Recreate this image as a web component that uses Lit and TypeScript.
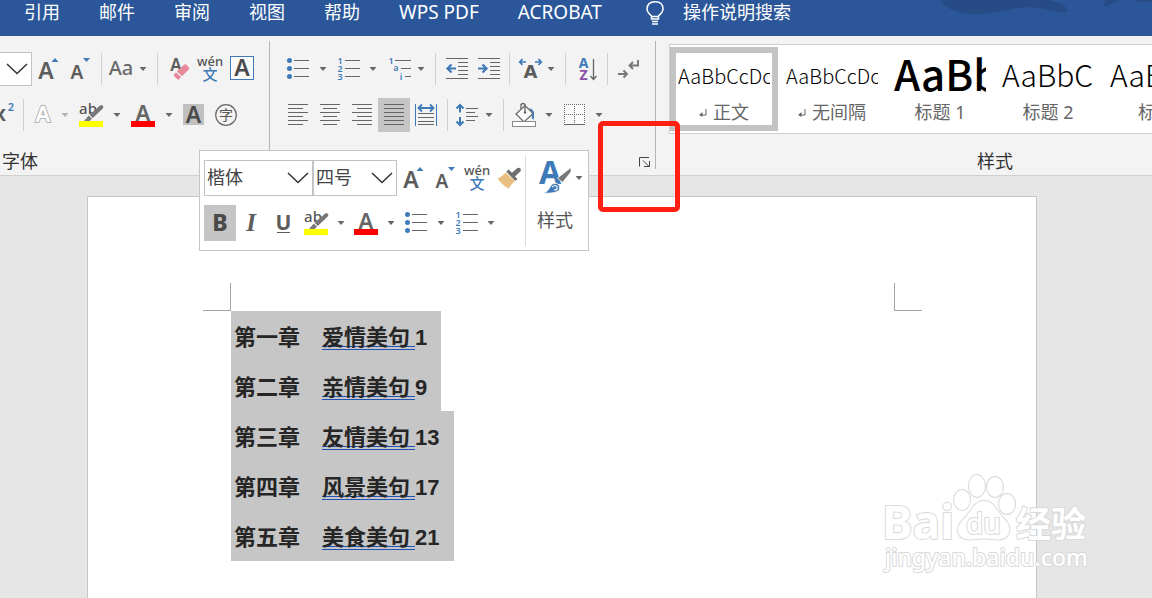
import { LitElement, html, svg, css, TemplateResult } from "lit";
import { customElement, property } from "lit/decorators.js";
import { classMap } from "lit/directives/class-map.js";

const GREY = "#666666";
const BLUE = "#3f7ab8";

const hline = (y: number, x1: number, x2: number) =>
  svg`<path d="M${x1} ${y + 0.5}H${x2}" stroke=${GREY} stroke-width="1"/>`;

const lines = (rows: Array<[number, number]>) => rows.map(([a, b], i) => hline(5 + i * 4, a, b));

const letter = (t: string, x: number, y: number, size: number, fill = "#5c5c5c", weight = 600, anchor = "middle") =>
  svg`<text x=${x} y=${y} font-size=${size} font-weight=${weight} fill=${fill} text-anchor=${anchor}>${t}</text>`;

const icons: Record<string, unknown> = {
  grow: svg`${letter("A", 14, 26, 23)}<path d="M19.500 9h7l-3.500-4z" fill=${BLUE}/>`,
  shrink: svg`${letter("A", 13, 26, 19)}<path d="M19 5h7l-3.500 4z" fill=${BLUE}/>`,
  aa: svg`${letter("Aa", 17, 22, 20, "#6a6a6a", 500)}`,
  clear: svg`${letter("A", 14, 18, 17)}
    <path d="M12 21.300 22.300 11.600Q23.500 10.800 24.500 11.800L27 14.500Q27.800 15.600 26.800 16.600L17 26.300Q16 27 15 26L12.300 23.300Q11.300 22.300 12 21.300Z" fill="#e88a9b"/>
    <path d="m14 18.500 6 5.500" stroke="#f3f3f3" stroke-width="1.200"/>`,
  pinyin: svg`${letter("wén", 16, 13, 13, "#555", 500)}${letter("文", 16, 27, 15, BLUE, 500)}`,
  charBorder: svg`<rect x="4.500" y="3.500" width="23" height="23" fill="#fafafa" stroke=${BLUE}/>${letter("A", 16, 23, 23, "#4a4a4a")}`,
  superscript: svg`${letter("x", 7, 22, 22)}${letter("2", 18, 12, 11, BLUE)}`,
  effects: svg`<text x="17" y="23" font-size="22" font-weight="600" text-anchor="middle" fill="#fff" stroke="#b4b4b4" stroke-width="2" paint-order="stroke">A</text>`,
  highlight: svg`${letter("ab", 13, 15, 15, "#555", 500)}
    <path d="M27.500 6.500q1.500 1 .5 2.700L17.800 19l-3.300-3.200L24.800 6.700q1.500-1.200 2.700-.2z" fill="#777"/>
    <path d="M13.700 16.500 17 19.700 14.500 22H9z" fill="#777"/><rect x="4" y="22" width="24" height="6" fill="#ff0"/>`,
  fontColor: svg`${letter("A", 16, 22, 22, "#666")}<rect x="4" y="22" width="24" height="6" fill="#f00"/>`,
  charShade: svg`<rect x="5" y="5" width="21" height="21" fill="#c0c0c0"/>${letter("A", 15.5, 24, 23, "#4a4a4a")}`,
  enclose: svg`<circle cx="16" cy="16" r="10.300" fill="none" stroke="#666" stroke-width="1.200"/>${letter("字", 16, 21, 14, "#555", 400)}`,
  bullets: svg`${[7.5, 15.5, 23.5].map((y) => svg`<circle cx="7.500" cy=${y} r="2.500" fill=${BLUE}/>`)}
    ${[7, 15, 23].map((y) => hline(y, 12, 27))}`,
  numbers: svg`${[1, 2, 3].map((n, i) => letter(String(n), 8, 11 + i * 8, 9, BLUE))}
    ${[7, 15, 23].map((y) => hline(y, 13, 28))}`,
  multilevel: svg`${letter("1", 10, 11, 9, BLUE)}${letter("a", 15, 18, 9, BLUE)}${letter("i", 20, 27, 9, BLUE)}
    ${hline(7, 14, 30)}${hline(15, 20, 30)}${hline(23, 24, 30)}`,
  outdent: svg`${hline(5, 6, 28)}${hline(25, 6, 28)}${[9, 13, 17, 21].map((y) => hline(y, 18, 28))}
    <path d="M16 15.500H8M11.500 11.500 7.500 15.500l4 4" fill="none" stroke=${BLUE} stroke-width="2.200"/>`,
  indent: svg`${hline(5, 6, 28)}${hline(25, 6, 28)}${[9, 13, 17, 21].map((y) => hline(y, 18, 28))}
    <path d="M6 15.500h8M10.500 11.500l4 4-4 4" fill="none" stroke=${BLUE} stroke-width="2.200"/>`,
  stretch: svg`<text class="wide" x="18.500" y="25" font-size="18" font-weight="700" fill="#5c5c5c" text-anchor="middle">A</text>
    <path d="M14 9H8M10.500 6.200 7.700 9l2.800 2.800M23 9h6M26.500 6.200 29.300 9l-2.800 2.800" fill="none" stroke=${BLUE} stroke-width="1.700"/>`,
  sort: svg`${letter("A", 13.5, 15, 14, BLUE, 700)}${letter("Z", 13.5, 27, 14, "#8a4fa8", 700)}
    <path d="M23.500 6v20M20.500 23l3 3.500 3-3.500" fill="none" stroke="#666" stroke-width="1.300"/>`,
  marks: svg`<path d="M26 7v5.500h-8M21 9l-3.500 3.500L21 16M6 21h8M11.500 17.500 15 21l-3.500 3.500" fill="none" stroke="#777" stroke-width="1.900"/>`,
  alignLeft: lines([[6, 26], [6, 21], [6, 26], [6, 21], [6, 26], [6, 21]]),
  alignCenter: lines([[6, 26], [9, 23], [6, 26], [9, 23], [6, 26], [9, 23]]),
  alignRight: lines([[6, 26], [11, 26], [6, 26], [11, 26], [6, 26], [11, 26]]),
  justify: lines([[6, 26], [6, 26], [6, 26], [6, 26], [6, 26], [6, 26]]),
  distribute: svg`<path d="M5.500 5v22M26.500 5v22" stroke=${BLUE}/>
    <path d="M9 9h14M12 5.500 8.500 9l3.500 3.500M20 5.500 23.500 9 20 12.500" fill="none" stroke=${BLUE} stroke-width="1.800"/>
    ${[14, 18, 22, 25].map((y) => hline(y, 8, 24))}`,
  spacing: svg`<path d="M10 6v7.500M6.500 9.500 10 6l3.500 3.500M10 18v8M6.500 22.500 10 26l3.500-3.500" fill="none" stroke=${BLUE} stroke-width="2"/>
    ${hline(9, 16, 28)}${hline(13, 16, 25)}${hline(17, 16, 28)}${hline(21, 16, 25)}`,
  shading: svg`<path d="m8 15 9-8.500 8 8-9 8.500z" fill="#fafafa" stroke="#666" stroke-width="1.200"/>
    <path d="M13 10V5.500q2-2 4 0V13" fill="none" stroke="#666" stroke-width="1.300"/><circle cx="17" cy="13.500" r="1.300" fill="#666"/>
    <path d="M21 9q7 1 4.500 12-1.500-1-2-3l1.500-3.500z" fill=${BLUE}/>
    <rect x="4.500" y="22.500" width="23" height="5" fill="#fff" stroke="#888"/>`,
  borders: svg`<rect x="6" y="5" width="21" height="21" fill="#fafafa"/>
    <path d="M6 5.500h21M6 15.500h21M6.500 5v20M16.500 5v20M26.500 5v20" stroke="#666" stroke-dasharray="1 1"/><path d="M6 25.500h21" stroke="#666"/>`,
  painter: svg`<path d="M4.500 16.500Q9 15 12.500 10.500L22 19q-3.500 3-6.500 7.500Q9 23 4.500 16.500z" fill="#e9c081"/>
    <path d="m15.500 7.500 3.500 3.300 5-4.600q2.500-1 3.500.5t-.5 3l-5 4.800 2.500 2.500-2.200 2L13.300 9.800z" fill="#6f6f6f"/>`,
  bold: svg`${letter("B", 16, 24, 23, "#4a4a4a", 800)}`,
  italic: svg`<text class="serif" x="15" y="24" font-size="25" font-weight="700" font-style="italic" fill="#5c5c5c" text-anchor="middle">I</text>`,
  underline: svg`${letter("U", 15.5, 23, 21, "#5c5c5c", 700)}<path d="M9 25.500h13" stroke="#5c5c5c"/>`,
};

@customElement("tool-button")
class ToolButton extends LitElement {
  @property() icon = "";
  @property() label = "";
  @property() size = "m";
  @property({ type: Boolean }) menu = false;
  @property({ type: Boolean }) active = false;
  @property({ type: Boolean }) faded = false;

  static styles = css`
    :host { display: flex; flex: none; }
    button { display: flex; align-items: center; justify-content: center; padding: 0; border: 0; background: none; }
    .xs { width: 18px; }
    .s { width: 28px; }
    .sm { width: 30px; }
    .m { width: 32px; }
    .l { width: 34px; }
    .active { background: #c5c5c5; }
    .arrow { width: 18px; }
    .faded { opacity: 0.45; }
    svg { flex: none; display: block; font-family: "Noto Sans", "Noto Sans CJK SC", sans-serif; }
    .serif { font-family: "Liberation Serif", serif; }
    .wide { font-family: "DejaVu Sans", sans-serif; }
  `;

  render() {
    return html`
      <button class=${classMap({ [this.size]: true, active: this.active })} aria-label=${this.label}>
        <svg width="32" height="32" viewBox="0 0 32 32">${icons[this.icon]}</svg>
      </button>
      ${this.menu
        ? html`<button class=${classMap({ arrow: true, faded: this.faded })} aria-label="${this.label}选项">
            <svg width="8" height="4" viewBox="0 0 8 4"><path d="M.5 0h7L4 4z" fill="#666"/></svg>
          </button>`
        : null}
    `;
  }
}

@customElement("drop-down")
class DropDown extends LitElement {
  @property() value = "";
  @property() label = "";

  static styles = css`
    :host { display: grid; box-sizing: border-box; border: 1px solid #c3c3c3; background: #fff; }
    select, svg { grid-area: 1 / 1; }
    select {
      appearance: none; border: 0; background: none; padding: 0 0 2px 2px; min-width: 0;
      font: 18px "Noto Sans", "Noto Sans CJK SC", sans-serif; color: #444;
    }
    svg { place-self: center end; margin-right: 3px; pointer-events: none; }
  `;

  render() {
    return html`
      <select aria-label=${this.label}><option>${this.value}</option></select>
      <svg width="22" height="12" viewBox="0 0 22 12"><path d="m1 1 10 9.500L21 1" fill="none" stroke="#333" stroke-width="1.500"/></svg>
    `;
  }
}

type Tool = [icon: string, label: string, opts?: { size?: string; menu?: boolean; active?: boolean; faded?: boolean }];

const toolRow = (tools: Array<Tool | null>): TemplateResult[] =>
  tools.map((t) =>
    t
      ? html`<tool-button .icon=${t[0]} .label=${t[1]} .size=${t[2]?.size ?? "m"} .menu=${!!t[2]?.menu}
          .active=${!!t[2]?.active} .faded=${!!t[2]?.faded}></tool-button>`
      : html`<span class="sep"></span>`
  );

const fontRow1: Array<Tool | null> = [
  ["grow", "增大字号"], ["shrink", "减小字号"], null,
  ["aa", "更改大小写", { size: "s", menu: true }], null,
  ["clear", "清除格式"], ["pinyin", "拼音指南"], ["charBorder", "字符边框"],
];
const fontRow2: Array<Tool | null> = [
  ["superscript", "上标", { size: "xs" }], null,
  ["effects", "文本效果", { size: "s", menu: true, faded: true }],
  ["highlight", "突出显示", { size: "l", menu: true }],
  ["fontColor", "字体颜色", { size: "l", menu: true }],
  ["charShade", "字符底纹"], ["enclose", "带圈字符"],
];
const paraRow1: Array<Tool | null> = [
  ["bullets", "项目符号", { menu: true }], ["numbers", "编号", { menu: true }],
  ["multilevel", "多级列表", { size: "sm", menu: true }], null,
  ["outdent", "减少缩进量"], ["indent", "增加缩进量"], null,
  ["stretch", "中文版式", { size: "s", menu: true }], null,
  ["sort", "排序"], null, ["marks", "显示编辑标记"],
];
const paraRow2: Array<Tool | null> = [
  ["alignLeft", "左对齐"], ["alignCenter", "居中"], ["alignRight", "右对齐"],
  ["justify", "两端对齐", { active: true }], ["distribute", "分散对齐"], null,
  ["spacing", "行距", { size: "s", menu: true }], null,
  ["shading", "底纹", { menu: true }], ["borders", "边框", { menu: true }],
];
const miniRow1: Tool[] = [["grow", "增大字号"], ["shrink", "减小字号"], ["pinyin", "拼音指南"], ["painter", "格式刷"]];
const miniRow2: Tool[] = [
  ["bold", "加粗", { active: true }], ["italic", "倾斜"], ["underline", "下划线"],
  ["highlight", "突出显示", { menu: true }], ["fontColor", "字体颜色", { menu: true }],
  ["bullets", "项目符号", { menu: true }], ["numbers", "编号", { menu: true }],
];

const styleCells = [
  { sample: "AaBbCcDc", name: "正文", kind: "body", mark: true },
  { sample: "AaBbCcDc", name: "无间隔", kind: "body", mark: true },
  { sample: "AaBb", name: "标题 1", kind: "h1", mark: false },
  { sample: "AaBbC", name: "标题 2", kind: "h2", mark: false },
  { sample: "AaBbC", name: "标题", kind: "h2", mark: false },
];

const chapters = [
  ["第一章", "爱情美句", "1"],
  ["第二章", "亲情美句", "9"],
  ["第三章", "友情美句", "13"],
  ["第四章", "风景美句", "17"],
  ["第五章", "美食美句", "21"],
];

@customElement("app-root")
class AppRoot extends LitElement {
  static styles = css`
    :host {
      display: flex; flex-direction: column; position: relative; height: 100vh; overflow: hidden;
      font: 18px/28px "Noto Sans", "Noto Sans CJK SC", sans-serif; color: #333; background: #e6e6e6;
    }
    header {
      display: flex; align-items: flex-start; box-sizing: border-box; height: 36px; flex: none;
      padding-left: 24px; position: relative; background: #2b579a; overflow: hidden;
    }
    nav { display: flex; gap: 39px; }
    nav a { color: #fff; text-decoration: none; line-height: 24px; white-space: nowrap; }
    .latin { font-size: 19px; }
    .art { position: absolute; right: 0; top: 0; }
    .search { display: flex; align-items: flex-start; gap: 18px; margin-left: 43px; }
    .search input {
      width: 180px; height: 24px; padding: 0; border: 0; background: none; color: #fff; outline: none;
      font: 18px/24px "Noto Sans", "Noto Sans CJK SC", sans-serif;
    }
    .search input::placeholder { color: #fff; opacity: 1; }

    .ribbon { display: flex; flex: none; box-sizing: border-box; height: 140px; background: #f3f3f3; border-bottom: 1px solid #d0d0d0; overflow: hidden; }
    .group { display: flex; flex-direction: column; flex: none; box-sizing: border-box; margin: 5px 0 6px; padding-top: 11px; border-right: 1px solid #b4b4b4; }
    .font { width: 270px; }
    .para { width: 386px; padding-left: 12px; }
    .row { display: flex; flex: none; height: 34px; }
    .row + .row { margin-top: 12px; }
    .row drop-down { width: 32px; border-left: 0; }
    .sep { width: 1px; margin: 1px 4px 1px 5px; background: #d2d2d2; flex: none; }
    .caption { padding: 20px 0 0 2px; line-height: 18px; }
    .launcher { align-self: flex-end; margin: 24px 4px 0 0; padding: 0; border: 0; background: none; display: flex; }

    .styles { width: 678px; flex: none; box-sizing: border-box; padding: 8px 0 0 13px; }
    .gallery { display: flex; box-sizing: border-box; height: 90px; padding: 2px 0; background: #fff; border: 1px solid #cfcfcf; }
    .cell {
      display: flex; flex-direction: column; box-sizing: border-box; width: 108px; height: 84px; flex: none;
      padding: 0 2px; border: 6px solid transparent; background: none; font: inherit; color: #666;
    }
    .chosen { border-color: #c3c3c3; }
    .sample { height: 46px; line-height: 46px; overflow: hidden; white-space: nowrap; text-align: left; color: #000; align-self: stretch; font-family: "Noto Sans CJK SC", sans-serif; }
    .body { font-size: 20px; font-weight: 300; }
    .h1 { font-size: 42px; font-weight: 500; line-height: 40px; }
    .h2 { font-size: 30px; font-weight: 300; line-height: 42px; }
    .name { display: flex; align-items: center; justify-content: center; gap: 6px; align-self: stretch; height: 26px; line-height: 26px; white-space: nowrap; }
    .styles .caption { text-align: center; padding: 18px 13px 0 0; }

    main { flex: 1; min-height: 0; display: flex; padding: 20px 115px 0 87px; }
    .page { flex: 1; box-sizing: border-box; background: #fff; border: 1px solid #c6c6c6; border-bottom: 0; padding: 86px 114px 0 115px; }
    .marks { display: flex; justify-content: space-between; }
    .mark { width: 28px; height: 28px; box-sizing: border-box; border-bottom: 1px solid #a6a6a6; }
    .mark.start { border-right: 1px solid #a6a6a6; }
    .mark.end { border-left: 1px solid #a6a6a6; }
    .text { display: flex; flex-direction: column; align-items: flex-start; padding-left: 28px; }
    .line {
      margin: 0; padding: 0 14px 2px 3px; line-height: 48px; background: #c6c6c6; color: #262626; white-space: pre;
      font-family: "KaiTi", "Noto Sans CJK SC", sans-serif; font-size: 22px; font-weight: 700;
    }
    .line a { display: inline-block; line-height: 22px; color: inherit; text-decoration: none; border-bottom: 4px double #1f52b4; }
    .num { font-family: "Liberation Sans", sans-serif; line-height: 22px; }

    .mini { position: absolute; left: 199px; top: 150px; display: flex; background: #fff; border: 1px solid #c6c6c6; }
    .tools { display: flex; flex-direction: column; gap: 9px; padding: 9px 0 9px 4px; }
    .tools .line-row { display: flex; height: 36px; }
    .family { width: 109px; }
    .size { width: 84px; }
    .apply {
      display: grid; grid-template-columns: 36px 12px; align-content: start; gap: 10px 2px; margin: 4px 0; padding: 5px 0 0 11px; width: 63px;
      border: 0; border-left: 1px solid #dcdcdc; background: none; font: inherit; color: #555; text-align: left; align-items: center;
    }
    .apply svg { display: block; }
    .callout { position: absolute; left: 598px; top: 121px; width: 82px; height: 91px; box-sizing: border-box; border: 5px solid #ff2012; border-radius: 5px; pointer-events: none; }
    .watermark { position: absolute; right: 58px; bottom: 20px; font-family: "Noto Sans", "Noto Sans CJK SC", sans-serif; pointer-events: none; }
  `;

  render() {
    return html`
      <header>
        <svg class="art" width="260" height="36" viewBox="0 0 260 36">
          <path d="M48 0q8 12 30 14 18 1 38-4t36-1q20 4 24 3-2-5-5-8l-14-4z" fill="#264b85"/>
          <path d="M212 7q8-3 15-7h-14z" fill="#264b85"/>
          <path d="M240 0q8 3 20 2V0z" fill="#264b85"/>
        </svg>
        <nav>
          ${["引用", "邮件", "审阅", "视图", "帮助"].map((t) => html`<a href="#">${t}</a>`)}
          ${["WPS PDF", "ACROBAT"].map((t) => html`<a class="latin" href="#">${t}</a>`)}
        </nav>
        <label class="search">
          <svg width="20" height="26" viewBox="0 0 20 26" fill="none" stroke="#fff" stroke-width="1.500">
            <path d="M6.500 19v-3Q2 12 2 9.300 2 2 10 1.800T18 9.300Q18 12 13.500 16v3zM6.500 16.500h7M7 21.500h6M7 24h6"/>
          </svg>
          <input type="text" aria-label="操作说明搜索" placeholder="操作说明搜索" />
        </label>
      </header>

      <section class="ribbon">
        <div class="group font">
          <div class="row"><drop-down label="字号"></drop-down>${toolRow(fontRow1)}</div>
          <div class="row">${toolRow(fontRow2)}</div>
          <div class="caption">字体</div>
        </div>
        <div class="group para">
          <div class="row">${toolRow(paraRow1)}</div>
          <div class="row">${toolRow(paraRow2)}</div>
          <button class="launcher" aria-label="段落设置">
            <svg width="12" height="12" viewBox="0 0 12 12" fill="none" stroke="#444">
              <path d="M.5 10.500V1.500H10M4 4.500l6 6M10.500 5v5.500H5"/>
            </svg>
          </button>
        </div>
        <div class="styles">
          <div class="gallery">
            ${styleCells.map(
              (c, i) => html`<button class=${classMap({ cell: true, chosen: i === 0 })}>
                <span class="sample ${c.kind}">${c.sample}</span>
                <span class="name">
                  ${c.mark
                    ? html`<svg width="8" height="10" viewBox="0 0 8 10"><path d="M7 2v6H2" fill="none" stroke="#666"/><path d="M0 8l3.500-3v5z" fill="#666"/></svg>`
                    : null}${c.name}
                </span>
              </button>`
            )}
          </div>
          <div class="caption">样式</div>
        </div>
      </section>

      <main>
        <article class="page">
          <div class="marks"><span class="mark start"></span><span class="mark end"></span></div>
          <div class="text">
            ${chapters.map(
              ([no, title, page]) =>
                html`<p class="line">${no}${"\u3000"}<a href="#">${title} </a><span class="num">${page}</span></p>`
            )}
          </div>
        </article>
      </main>

      <div class="mini">
        <div class="tools">
          <div class="line-row">
            <drop-down class="family" label="字体" value="楷体"></drop-down>
            <drop-down class="size" label="字号" value="四号"></drop-down>
            ${toolRow(miniRow1)}
          </div>
          <div class="line-row">${toolRow(miniRow2)}</div>
        </div>
        <button class="apply">
          <svg width="36" height="36" viewBox="0 0 36 36">
            <text x="13" y="24" font-size="32" font-weight="700" fill=${BLUE} text-anchor="middle">A</text>
            <path d="M34 7.500V12L25.500 22.500 20.500 18z" fill="#777" stroke="#fff" stroke-width=".8"/>
            <path d="M6 33q5-1 7-6 2-4.500 7-3.500 4 2 2.500 6Q20 34 6 33z" fill=${BLUE} stroke="#fff" stroke-width=".8"/>
            <path d="M15 27q4-3 5 0t-3 3" fill="none" stroke="#fff" stroke-width="1.200"/>
          </svg>
          <svg width="8" height="4" viewBox="0 0 8 4"><path d="M.5 0h7L4 4z" fill="#666"/></svg>
          <span>样式</span>
        </button>
      </div>

      <div class="callout"></div>

      <svg class="watermark" width="212" height="106" viewBox="0 0 212 106">
        <g fill="#ffffff" stroke="#d9d9d9" stroke-width="2" paint-order="stroke" stroke-linejoin="round">
          <text x="0" y="67" font-size="46" font-weight="700">Bai</text>
          <ellipse cx="80" cy="28" rx="8" ry="10"/>
          <ellipse cx="95" cy="14" rx="8" ry="11"/>
          <ellipse cx="113" cy="15" rx="8" ry="10"/>
          <ellipse cx="125" cy="32" rx="8" ry="10"/>
          <path d="M102 29q8 0 13 9 4 6 10 12 5 8 0 14-5 5-14 3-9-1-18 0-10 2-15-3-5-7 1-14 6-6 10-12 5-9 13-9z"/>
          <text x="84" y="62" font-size="28" font-weight="500">du</text>
          <text x="134" y="65" font-size="35" font-weight="700">经验</text>
          <text x="3" y="94" font-size="23" font-weight="500">jingyan.baidu.com</text>
        </g>
      </svg>
    `;
  }
}
